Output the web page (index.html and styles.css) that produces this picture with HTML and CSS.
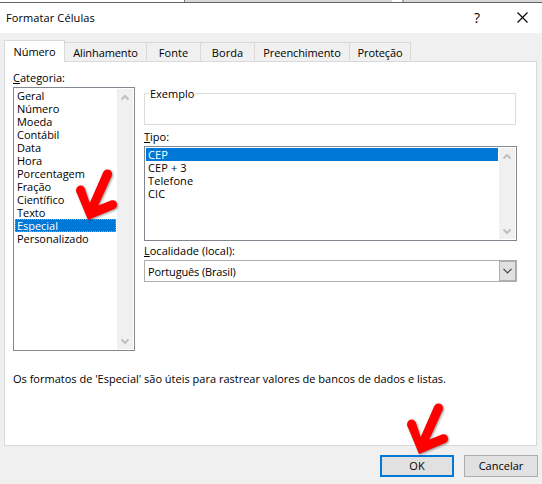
FILE: index.html
```html
<!DOCTYPE html>
<html lang="pt-BR">
<head>
<meta charset="utf-8">
<title>Formatar Células</title>
<link rel="stylesheet" href="styles.css">
</head>
<body>
<div class="dialog">
  <div class="backdrop"><i class="cell-a"></i><i class="cell-b"></i><i class="cell-c"></i><i class="cell-d"></i></div>
  <header class="titlebar">
    <span class="title">Formatar Células</span>
    <span class="help">?</span>
    <svg class="close" width="11" height="11" viewBox="0 0 11 11"><path d="M.5 .5l10 10M10.500 .5l-10 10"/></svg>
  </header>
  <nav class="tabs">
    <span class="tab active">Número</span>
    <span class="tab alignment">Alinhamento</span>
    <span class="tab font">Fonte</span>
    <span class="tab border">Borda</span>
    <span class="tab fill">Preenchimento</span>
    <span class="tab protection">Proteção</span>
  </nav>
  <main class="panel">
    <div class="columns">
      <section class="categories">
        <div class="label"><u>C</u>ategoria:</div>
        <div class="listbox category-list">
          <ul>
            <li>Geral</li><li>Número</li><li>Moeda</li><li>Contábil</li><li>Data</li><li>Hora</li><li>Porcentagem</li><li>Fração</li><li>Científico</li><li>Texto</li><li class="selected focused">Especial</li><li>Personalizado</li>
          </ul>
          <div class="scrollbar">
            <svg width="8" height="7" viewBox="0 0 8 7"><path d="M.5 5.500L4 2l3.500 3.500"/></svg>
            <svg width="8" height="7" viewBox="0 0 8 7"><path d="M.5 1.500L4 5l3.500-3.500"/></svg>
          </div>
        </div>
      </section>
      <section class="options">
        <div class="sample"><span>Exemplo</span></div>
        <div class="label type-label"><u>T</u>ipo:</div>
        <div class="listbox type-list">
          <ul>
            <li class="selected">CEP</li><li>CEP + 3</li><li>Telefone</li><li>CIC</li>
          </ul>
          <div class="scrollbar">
            <svg width="8" height="7" viewBox="0 0 8 7"><path d="M.5 5.500L4 2l3.500 3.500"/></svg>
            <svg width="8" height="7" viewBox="0 0 8 7"><path d="M.5 1.500L4 5l3.500-3.500"/></svg>
          </div>
        </div>
        <div class="label locale-label"><u>L</u>ocalidade (local):</div>
        <div class="combo"><span>Português (Brasil)</span><div class="drop"><svg width="9" height="6" viewBox="0 0 9 6"><path d="M.5 .8l4 4 4-4"/></svg></div></div>
      </section>
    </div>
    <p class="description">Os formatos de 'Especial' são úteis para rastrear valores de bancos de dados e listas.</p>
  </main>
  <footer class="actions">
    <button class="primary">OK</button>
    <button>Cancelar</button>
  </footer>
  <svg class="arrow arrow-list" width="46" height="56" viewBox="0 0 46 56"><path d="M3.300 27.800L15 56 41.200 44.900 38 36.500 25.300 41.500 38.700 11.900 30.300 8 16.700 39 11.900 24.700z"/><circle cx="34.500" cy="10" r="4.600"/><circle cx="7.600" cy="26.200" r="4.600"/><circle cx="39.600" cy="40.700" r="4.500"/></svg>
  <svg class="arrow arrow-ok" width="46" height="56" viewBox="0 0 46 56"><path d="M3.300 27.800L15 56 41.200 44.900 38 36.500 25.300 41.500 38.700 11.900 30.300 8 16.700 39 11.900 24.700z"/><circle cx="34.500" cy="10" r="4.600"/><circle cx="7.600" cy="26.200" r="4.600"/><circle cx="39.600" cy="40.700" r="4.500"/></svg>
</div>
</body>
</html>
```
FILE: styles.css
```css
* { box-sizing: border-box; }
body { margin: 0; background: #f0f0f0; color: #000; font: 11px/13px "Open Sans", "Noto Sans", sans-serif; }
.dialog { position: relative; width: 542px; height: 484px; overflow: hidden; }
.backdrop { display: flex; height: 3px; border-bottom: 1px solid #646464; background: #fff; }
.cell-a { width: 184px; }
.cell-b { width: 208px; background: #d8d8d8; border-left: 1px solid #777; }
.cell-c { width: 10px; }
.cell-d { flex: 1; background: #d8d8d8; border-left: 2px solid #aaa; }
.titlebar { display: flex; align-items: center; height: 30px; padding: 0 14px 0 6px; background: #fff; }
.title { flex: 1; position: relative; top: -1px; letter-spacing: .1px; }
.help { margin-right: 37px; position: relative; top: -1px; font-size: 14px; }
.close { position: relative; top: -1px; fill: none; stroke: #000; stroke-width: 1.1; }
.tabs { position: relative; z-index: 1; display: flex; align-items: flex-end; height: 29px; margin: 0 0 -1px 4px; }
.tab { height: 20px; padding-top: 3px; border: 1px solid #d9d9d9; border-left: 0; text-align: center; letter-spacing: -.1px; }
.active { width: 61px; height: 22px; padding-top: 4px; background: #fff; border-left: 1px solid #d9d9d9; border-bottom: 0; }
.alignment { width: 82px; }
.font, .border { width: 54px; letter-spacing: .1px; }
.fill { width: 95px; }
.protection { width: 61px; }
.panel { width: 533px; height: 385px; margin-left: 4px; padding: 9px 19px 0 8px; background: #fff; border: 1px solid #d9d9d9; }
.columns { display: flex; gap: 9px; }
.categories { width: 122px; }
.label { height: 16px; }
.listbox { display: flex; justify-content: space-between; padding: 1px; border: 1px solid #828790; background: #fff; }
.category-list { height: 264px; }
ul { flex: 1; margin: 0 1px 0 0; padding: 0; list-style: none; letter-spacing: -.04px; }
li { height: 13px; padding-left: 2px; line-height: 13px; white-space: nowrap; }
.selected { background: #0078d7; color: #fff; }
.focused { outline: 1px dotted #ff8728; outline-offset: -1px; }
.scrollbar { display: flex; flex-direction: column; justify-content: space-between; align-items: center; width: 16px; padding: 5px 1px 4px 0; background: #f0f0f0; }
.scrollbar path { fill: none; stroke: #bfbfbf; stroke-width: 2; }
.options { width: 373px; padding-top: 22px; }
.sample { width: 372px; height: 32px; border: 1px solid #dcdcdc; }
.sample span { position: relative; top: -7px; left: 4px; display: inline-block; padding: 0 1px; background: #fff; line-height: 13px; }
.type-label { margin-top: 5px; }
.type-list { height: 95px; }
.type-list ul { letter-spacing: .1px; }
.type-list li { padding-left: 2px; }
.locale-label { margin-top: 3px; }
.combo { display: flex; justify-content: space-between; height: 22px; border: 1px solid #adadad; }
.combo span { padding: 4px 0 0 3px; letter-spacing: -.15px; }
.drop { display: flex; align-items: center; justify-content: center; width: 17px; border: 1px solid #adadad; background: #e1e1e1; }
.drop path { fill: none; stroke: #444; stroke-width: 1.2; }
.description { margin: 21px 0 0; white-space: nowrap; letter-spacing: 0; }
.actions { display: flex; justify-content: flex-end; gap: 10px; padding: 9px 4px 0 0; }
button { width: 74px; height: 22px; padding: 0 0 1px; border: 1px solid #adadad; border-radius: 0; background: #e1e1e1; color: #000; font: inherit; letter-spacing: 0; }
.primary { border: 2px solid #0078d7; }
.arrow { position: absolute; z-index: 2; overflow: visible; fill: #f00; filter: drop-shadow(1px 1px 1px #0006); }
.arrow-list { left: 73px; top: 164px; }
.arrow-ok { left: 404px; top: 398px; }
```
